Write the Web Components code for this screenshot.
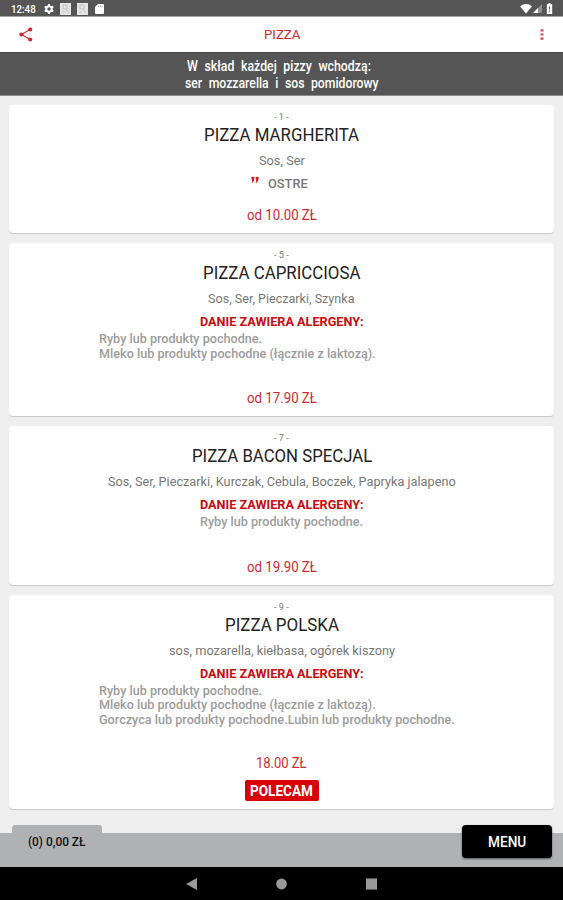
<!DOCTYPE html>
<html lang="pl">
<head>
<meta charset="utf-8">
<title>Pizza</title>
<style>
  html, body{
    margin: 0;
    height: 900px;
    overflow: hidden;
  }
  body{
    font-family: Roboto, "Liberation Sans", sans-serif;
    background: #efefef;
    --red: #cf2a30;
  }
</style>
</head>
<body>
<menu-screen>
  <status-bar slot="top"></status-bar>
  <app-header slot="top"><fit-text width="37">PIZZA</fit-text></app-header>
  <info-banner slot="top">
    <fit-text width="184">W skład każdej pizzy wchodzą:</fit-text>
    <fit-text width="194">ser mozzarella i sos pomidorowy</fit-text>
  </info-banner>

  <dish-card style="height:127.4px">
    <fit-text slot="number" width="15">- 1 -</fit-text>
    <fit-text slot="name" width="155">PIZZA MARGHERITA</fit-text>
    <fit-text slot="parts" width="46">Sos, Ser</fit-text>
    <hot-mark slot="extra"><fit-text width="40">OSTRE</fit-text></hot-mark>
    <fit-text slot="price" width="70">od 10.00 ZŁ</fit-text>
  </dish-card>

  <dish-card style="height:173.4px">
    <fit-text slot="number" width="15">- 5 -</fit-text>
    <fit-text slot="name" width="157">PIZZA CAPRICCIOSA</fit-text>
    <fit-text slot="parts" width="147">Sos, Ser, Pieczarki, Szynka</fit-text>
    <allergen-list slot="extra">
      <fit-text width="163.5">Ryby lub produkty pochodne.</fit-text>
      <fit-text width="277">Mleko lub produkty pochodne (łącznie z laktozą).</fit-text>
    </allergen-list>
    <fit-text slot="price" width="70">od 17.90 ZŁ</fit-text>
  </dish-card>

  <dish-card style="height:158.4px">
    <fit-text slot="number" width="15">- 7 -</fit-text>
    <fit-text slot="name" width="180">PIZZA BACON SPECJAL</fit-text>
    <fit-text slot="parts" width="348">Sos, Ser, Pieczarki, Kurczak, Cebula, Boczek, Papryka jalapeno</fit-text>
    <allergen-list slot="extra" centered>
      <fit-text width="163.5">Ryby lub produkty pochodne.</fit-text>
    </allergen-list>
    <fit-text slot="price" width="70">od 19.90 ZŁ</fit-text>
  </dish-card>

  <dish-card style="height:214px">
    <fit-text slot="number" width="15">- 9 -</fit-text>
    <fit-text slot="name" width="114">PIZZA POLSKA</fit-text>
    <fit-text slot="parts" width="226">sos, mozarella, kiełbasa, ogórek kiszony</fit-text>
    <allergen-list slot="extra">
      <fit-text width="163.5">Ryby lub produkty pochodne.</fit-text>
      <fit-text width="277">Mleko lub produkty pochodne (łącznie z laktozą).</fit-text>
      <fit-text width="356">Gorczyca lub produkty pochodne.Lubin lub produkty pochodne.</fit-text>
    </allergen-list>
    <fit-text slot="price" width="51">18.00 ZŁ</fit-text>
    <dish-badge slot="badge"><fit-text width="63">POLECAM</fit-text></dish-badge>
  </dish-card>

  <cart-bar slot="bottom">
    <fit-text slot="total" width="58">(0) 0,00 ZŁ</fit-text>
    <fit-text slot="action" width="38">MENU</fit-text>
  </cart-bar>
  <nav-bar slot="bottom"></nav-bar>
</menu-screen>

<script>
// one line of text, squeezed or stretched to the given width
customElements.define('fit-text', class extends HTMLElement{
  constructor(){
    super();
    this.attachShadow({mode: 'open'}).innerHTML = `
      <style>
        :host{ display: block; white-space: nowrap; }
        span{ display: inline-block; transform-origin: 0 50%; }
      </style>
      <span><slot></slot></span>
    `;
  }

  connectedCallback(){
    this.style.width = this.getAttribute('width') + 'px';
    requestAnimationFrame(() => this.fit());
  }

  fit(){
    const span = this.shadowRoot.querySelector('span');
    const natural = span.offsetWidth;
    if(natural) span.style.transform = `scaleX(${this.getAttribute('width') / natural})`;
  }
});

customElements.define('menu-screen', class extends HTMLElement{
  constructor(){
    super();
    this.attachShadow({mode: 'open'}).innerHTML = `
      <style>
        :host{ display: flex; flex-direction: column; width: 563px; height: 900px; }
        main{
          flex: 1;
          display: flex;
          flex-direction: column;
          gap: 10px;
          padding: 9.4px 9px 0;
          min-height: 0;
        }
      </style>
      <slot name="top"></slot>
      <main><slot></slot></main>
      <slot name="bottom"></slot>
    `;
  }
});

customElements.define('status-bar', class extends HTMLElement{
  constructor(){
    super();
    this.attachShadow({mode: 'open'}).innerHTML = `
      <style>
        :host{
          display: flex;
          align-items: center;
          box-sizing: border-box;
          height: 17px;
          padding: 2px 10px 0 11px;
          background: #555;
          border-bottom: 1px solid #a5a5a5;
          color: #fff;
          font-size: 10.5px;
          font-weight: 500;
        }
        svg{ display: block; }
        .gear{ margin-left: 8px; }
        .app{ margin-left: 6px; }
        .card{ margin-left: 7px; }
        .space{ flex: 1; }
      </style>
      <fit-text width="25">12:48</fit-text>
      <svg class="gear" width="10" height="10" viewBox="0 0 10 10">
        <circle cx="5" cy="5" r="2.7" fill="none" stroke="#fff" stroke-width="2"/>
        <path d="M5 0v2M5 8v2M.7 2.5l1.6 1M7.7 6.5l1.6 1M.7 7.5l1.6-1M7.7 3.5l1.6-1" stroke="#fff" stroke-width="2"/>
      </svg>
      <svg class="app" width="11" height="12" viewBox="0 0 11 12">
        <path d="M0 0h11v12H0z" fill="#e4e4e4"/>
        <path d="M3 2h4v4H3zM6 6l3 4M2 9h3" fill="none" stroke="#c2c2c2"/>
      </svg>
      <svg class="app" width="11" height="12" viewBox="0 0 11 12">
        <path d="M0 0h11v12H0z" fill="#e4e4e4"/>
        <path d="M3 2h4v4H3zM6 6l3 4M2 9h3" fill="none" stroke="#c2c2c2"/>
      </svg>
      <svg class="card" width="9" height="10" viewBox="0 0 9 10">
        <path d="M3 0h5q1 0 1 1v8q0 1-1 1H1q-1 0-1-1V3z" fill="#fff"/>
        <path d="M3.5 1.5v1.5M5.2 1.5v1.5M7 1.5v1.5" stroke="#999" stroke-width=".7"/>
      </svg>
      <div class="space"></div>
      <svg width="33" height="12" viewBox="0 0 33 12">
        <path d="M0 3.2Q6 -1 12 3.2L6 10.5z" fill="#fff"/>
        <path d="M22 1v9h-9z" fill="#909090"/>
        <path d="M18 5v5h-5z" fill="#fff"/>
        <path d="M28.5 0h2v1.3h1.7v9.7h-5.4V1.3h1.7z" fill="#fff"/>
        <path d="M29.5 3.5v3M29.5 7.5v1.2" stroke="#666" stroke-width="1.2"/>
      </svg>
    `;
  }
});

customElements.define('app-header', class extends HTMLElement{
  constructor(){
    super();
    this.attachShadow({mode: 'open'}).innerHTML = `
      <style>
        :host{
          display: flex;
          align-items: center;
          justify-content: space-between;
          box-sizing: border-box;
          height: 34.5px;
          padding: 0 16px 0 19px;
          background: #fff;
          color: var(--red);
          font-size: 12.5px;
        }
        svg{ display: block; fill: currentColor; }
        .more{ width: 10px; margin-left: 6px; }
      </style>
      <svg width="14" height="15" viewBox="0 0 14 15">
        <path d="M11 2.5L2.5 7.5L11 12.5" fill="none" stroke="currentColor" stroke-width="1.1"/>
        <circle cx="11.2" cy="2.5" r="2.1"/><circle cx="2.4" cy="7.5" r="2.1"/><circle cx="11.2" cy="12.5" r="2.1"/>
      </svg>
      <slot></slot>
      <svg class="more" width="10" height="13" viewBox="0 0 10 13">
        <path d="M3.5 1.2h3v2.2h-3zM3.5 5.4h3v2.2h-3zM3.5 9.6h3v2.2h-3z" opacity=".85"/>
      </svg>
    `;
  }
});

customElements.define('info-banner', class extends HTMLElement{
  constructor(){
    super();
    this.attachShadow({mode: 'open'}).innerHTML = `
      <style>
        :host{
          display: flex;
          flex-direction: column;
          align-items: center;
          box-sizing: border-box;
          height: 44.5px;
          padding: 5px 0 0;
          background: #555;
          border-top: 1px solid #444;
          border-bottom: 1px solid #8c8c8c;
          color: #fff;
          font-size: 14px;
          font-weight: 500;
          line-height: 17px;
          word-spacing: 4px;
        }
        ::slotted(:first-child){ margin-right: 5px; }
      </style>
      <slot></slot>
    `;
  }
});

customElements.define('dish-card', class extends HTMLElement{
  constructor(){
    super();
    this.attachShadow({mode: 'open'}).innerHTML = `
      <style>
        :host{
          display: flex;
          flex-direction: column;
          align-items: center;
          flex-shrink: 0;
          box-sizing: border-box;
          padding: 6px 0 8px;
          border-radius: 4px;
          background: #fff;
          box-shadow: 0 1px 1px #c8c8c8;
        }
        slot{ display: block; }
        .number{ font-size: 8.5px; line-height: 12px; color: #777; }
        .name{ font-size: 17.5px; line-height: 25px; color: #222; }
        .parts{ font-size: 12.5px; line-height: 26px; color: #777; }
        .price{ margin-top: auto; font-size: 14px; line-height: 20px; color: var(--red); }
        .badge{ margin-top: 7px; }
        .badge.none{ display: none; }
      </style>
      <slot class="number" name="number"></slot>
      <slot class="name" name="name"></slot>
      <slot class="parts" name="parts"></slot>
      <slot name="extra"></slot>
      <slot class="price" name="price"></slot>
      <slot class="badge" name="badge"></slot>
    `;
  }

  connectedCallback(){
    const badge = this.shadowRoot.querySelector('.badge');
    badge.classList.toggle('none', !this.querySelector('[slot=badge]'));
  }
});

customElements.define('hot-mark', class extends HTMLElement{
  constructor(){
    super();
    this.attachShadow({mode: 'open'}).innerHTML = `
      <style>
        :host{
          display: flex;
          gap: 9px;
          padding-right: 4px;
          font-size: 12.5px;
          font-weight: 500;
          line-height: 20px;
          color: #777;
        }
        svg{ display: block; margin-top: 2px; }
      </style>
      <svg width="8" height="9" viewBox="0 0 8 9">
        <path d="M.2 1.5Q1.5 0 3.5 1.2Q3.8 4.5.8 7.5Q1.4 4.5.2 1.5zM4.4 1.5Q5.7 0 7.7 1.2Q8 4.5 5 7.5Q5.6 4.5 4.4 1.5z" fill="#cf1a22"/>
      </svg>
      <slot></slot>
    `;
  }
});

customElements.define('allergen-list', class extends HTMLElement{
  constructor(){
    super();
    this.attachShadow({mode: 'open'}).innerHTML = `
      <style>
        :host{
          display: flex;
          flex-direction: column;
          align-items: center;
          width: 365px;
          font-size: 12.5px;
        }
        .title{ font-weight: 700; line-height: 19px; color: #cc0a0f; }
        .lines{
          align-self: stretch;
          display: flex;
          flex-direction: column;
          padding-top: 1px;
          font-weight: 500;
          line-height: 14.8px;
          color: #9c9c9c;
        }
        :host([centered]) .lines{ align-items: center; }
      </style>
      <fit-text class="title" width="164">DANIE ZAWIERA ALERGENY:</fit-text>
      <div class="lines"><slot></slot></div>
    `;
  }
});

customElements.define('dish-badge', class extends HTMLElement{
  constructor(){
    super();
    this.attachShadow({mode: 'open'}).innerHTML = `
      <style>
        :host{
          display: flex;
          justify-content: center;
          width: 74px;
          height: 20.5px;
          border-radius: 2px;
          background: #d90008;
          color: #fff;
          font-size: 14px;
          font-weight: 700;
          line-height: 22px;
        }
      </style>
      <slot></slot>
    `;
  }
});

customElements.define('cart-bar', class extends HTMLElement{
  constructor(){
    super();
    this.attachShadow({mode: 'open'}).innerHTML = `
      <style>
        :host{
          display: flex;
          justify-content: space-between;
          align-items: flex-start;
          box-sizing: border-box;
          height: 43px;
          padding: 0 11px 0 12px;
          background: linear-gradient(transparent 9px, #b0b1b3 9px);
        }
        .total, .action{ display: flex; justify-content: center; }
        .total{
          width: 89.5px;
          height: 34px;
          margin-top: 1px;
          border-radius: 3px 3px 0 0;
          background: #b0b1b3;
          color: #111;
          font-size: 12.5px;
          font-weight: 500;
          line-height: 34px;
        }
        .action{
          width: 90px;
          height: 33px;
          margin-top: 1px;
          border-radius: 4px;
          background: #000;
          box-shadow: 0 1px 2px #555;
          color: #fff;
          font-size: 14px;
          font-weight: 500;
          line-height: 35px;
        }
      </style>
      <div class="total"><slot name="total"></slot></div>
      <div class="action"><slot name="action"></slot></div>
    `;
  }
});

customElements.define('nav-bar', class extends HTMLElement{
  constructor(){
    super();
    this.attachShadow({mode: 'open'}).innerHTML = `
      <style>
        :host{
          display: flex;
          justify-content: center;
          align-items: center;
          gap: 79px;
          height: 33px;
          background: #000;
        }
        svg{ display: block; fill: #999; }
      </style>
      <svg width="11" height="12" viewBox="0 0 11 12"><path d="M0 6L11 0v12z"/></svg>
      <svg width="11" height="12" viewBox="0 0 11 12"><circle cx="5.5" cy="6" r="5.4"/></svg>
      <svg width="11" height="12" viewBox="0 0 11 12"><path d="M0 .5h11v11H0z"/></svg>
    `;
  }
});
</script>
</body>
</html>
